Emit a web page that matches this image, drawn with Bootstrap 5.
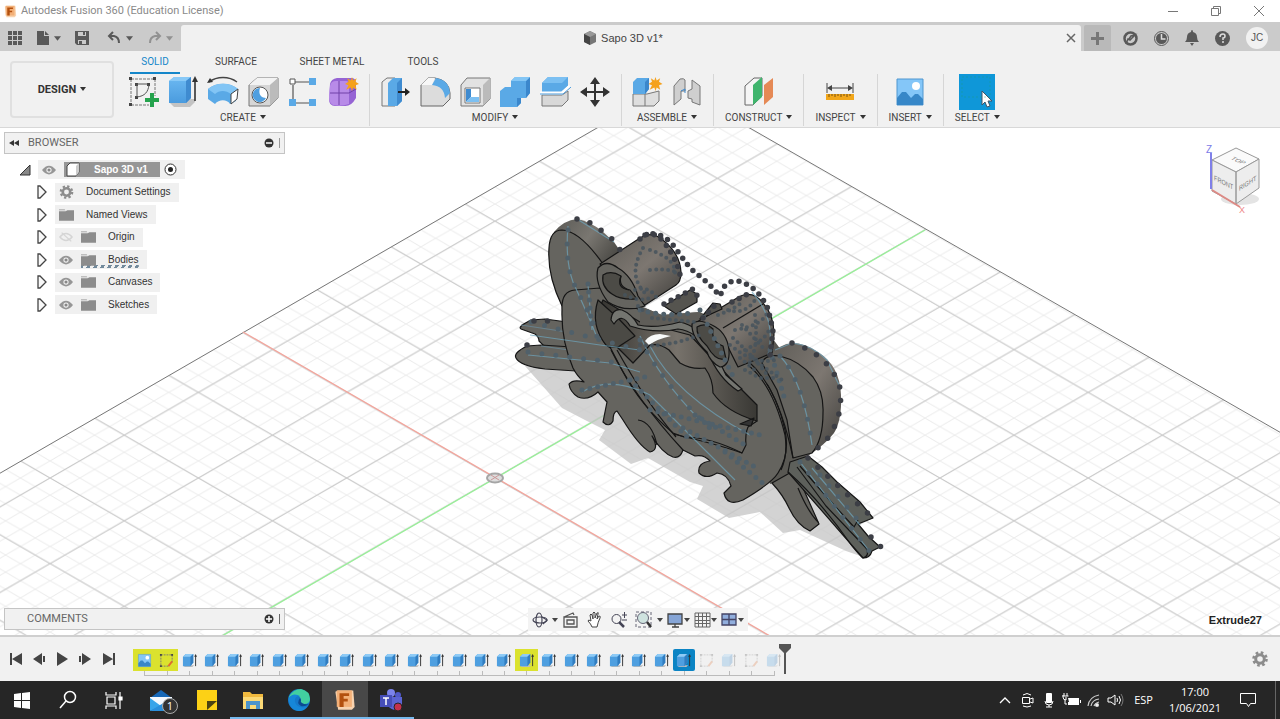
<!DOCTYPE html>
<html lang="en">
<head>
<meta charset="utf-8">
<meta name="viewport" content="width=device-width, initial-scale=1">
<title>Autodesk Fusion 360 (Education License)</title>
<link href="https://cdn.jsdelivr.net/npm/bootstrap@5.3.0/dist/css/bootstrap.min.css" rel="stylesheet">
<style>
body{font-family:"Liberation Sans",Arial,sans-serif;font-size:10px;line-height:16px;color:#444;background:#fff}
button{font:inherit;color:inherit;background:none;border:0;padding:0}
svg{display:block;flex:none}
.titlebar{height:22px;font:11px/22px Roboto,sans-serif;color:#8a8a8a}
.wbtn{width:43px;height:20px;color:#777;display:grid;place-items:center}
.docbar{height:29px;background:#cbcbcb;color:#595959;padding-top:3px}
.quick{width:181px}
.doctab{background:#f1f1f1;border-radius:3px 3px 0 0;font-size:11px;color:#444}
.newtab{width:27px;background:#b9b9b9;color:#777;margin-left:3px;border-radius:2px 2px 0 0;display:grid;place-items:center}
.account{width:22px;height:22px;border-radius:50%;background:#f1f1f1;color:#555}
.ribbon{background:#f1f1f1;height:77px;border-bottom:1px solid #d8d8d8;font-family:Roboto,sans-serif;color:#444}
.workspace{width:104px;height:57px;margin:10px 9px 0 10px;border:2px solid #e0e0e0;border-radius:4px;font-weight:700;font-size:11px;color:#333}
.rtabs{height:23px}
.rtabs a{color:#444;text-decoration:none;text-align:center;line-height:22px;height:23px}
.rtabs a.active{color:#1486c9;border-bottom:2px solid #1486c9}
.grp{height:52px;border-right:1px solid #d6d6d6;padding:0 6px 0 5px}
.grp.first{padding-left:0}
.grp.single{padding:0 11px}
.grp.last{border:0}
.tool{width:40px;height:36px}
.caption{line-height:16px}
.dd::after{content:"";display:inline-block;margin-left:4px;border:3px solid transparent;border-top:4px solid #333;border-bottom:0;vertical-align:2px}
.picked{background:#0f97d8;width:36px}
.scene{min-height:0}
.panelbar{width:281px;height:22px;background:#f1f1f1;border:1px solid #c4c4c4;color:#666;left:4px;font-family:Roboto,sans-serif}
.panelbar span{font-size:11px}
.tree{left:16px;top:32px;height:154px;color:#333}
.treerow{height:19px}
.plate{height:19px;background:#f0f0f0}
.expander{width:18px;height:19px}
.nested{padding-left:17px}
.rootname{background:#969696;color:#fff;font-weight:700;height:15px;line-height:15px}
.hatched{background:repeating-linear-gradient(120deg,#71899b 0 3px,transparent 3px 6px) bottom/100% 3px no-repeat}
.navbarlow{left:528px;bottom:4px;height:23px;background:#f3f3f3}
.hint{right:18px;bottom:7px;font-size:11px;font-weight:700;color:#222}
.viewcube{right:8px;top:10px}
.timeline{height:46px;background:#f1f1f1;border-top:2px solid #cfcfcf}
.transport button{width:23px;height:24px;color:#444}
.features{width:652px;height:28px;margin-left:14px}
.feature{height:22px}
.feature.mark-y{background:#dbe22e}
.feature.mark-b{background:#0b84c4;border-radius:2px}
.feature.dim svg{opacity:.25}
.feature::after{content:"";position:absolute;left:50%;top:22px;width:100%;height:5px;border:1px solid #bbb;border-width:0 0 1px 1px}
.feature:last-child::after{width:1px}
.taskbar{height:38px;background:#262626;color:#fff;font:11px/16px "Open Sans",sans-serif}
.app{width:46px;height:38px}
.app.open{box-shadow:inset 0 -2px #76b9ed}
.app.focus-app{background:#484848;box-shadow:inset 0 -2px #76b9ed}
.tray button{width:22px;height:38px}
.badge1{left:24px;top:17px;width:16px;height:16px;border-radius:50%;background:#333;border:1px solid #aaa;line-height:14px}
</style>
</head>
<body class="vh-100 d-flex flex-column overflow-hidden">

<svg width="0" height="0" class="position-absolute" aria-hidden="true">
<defs>
<linearGradient id="gb" x2="0" y2="1"><stop stop-color="#6cb9f2"/><stop offset="1" stop-color="#4a9bde"/></linearGradient>
<symbol id="arrow" viewBox="0 0 6 6"><path d="M0 1h6L3 5z" fill="currentColor"/></symbol>
<symbol id="fusion" viewBox="0 0 16 16"><path d="M1 2l2-1h11l1 12-2 2H3z" fill="#f8d3b0"/><path d="M2 1h11v12H2z" fill="#f3b078"/><path d="M4 3h7v2H7v2h3v2H7v4H4z" fill="#b3500f"/></symbol>
<symbol id="sketch" viewBox="0 0 32 32"><path d="M4 3h24M4 3v27M28 3v17M4 29h18" stroke="#777" stroke-dasharray="3 1" fill="none"/><path d="M2 1h3v3H2zM26 1h3v3h-3zM2 27h3v3H2zM8 7h3v3H8zM20 7h3v3h-3zM8 20h3v3H8z" fill="#444"/><path d="M10 8h11M10 8v13M22 9c-1 7-4 11-12 12" fill="none" stroke="#555"/><path d="M23 17h4v5h5v4h-5v5h-4v-5h-5v-4h5z" fill="#25a34d"/></symbol>
<symbol id="extrude" viewBox="0 0 32 32"><path d="M2 26l5 5h16l5-5v-3H2z" fill="#c3c3c3"/><path d="M2 5l5-4h17v21l-5 5H2z" fill="url(#gb)"/><path d="M2 5l5-4h17l-5 4z" fill="#88c9f7"/><path d="M19 5l5-4v21l-5 5z" fill="#3f8bd0"/><path d="M28 3v22" stroke="#333" stroke-width="1.6"/><path d="M28 0l3 6h-6z" fill="#333"/></symbol>
<symbol id="revolve" viewBox="0 0 32 32"><path d="M2 6C10 0 22 0 30 6" fill="none" stroke="#444" stroke-width="1.3"/><path d="M0 7l6-1-3-4z" fill="#333"/><path d="M1 13c8-7 22-7 30 0l-2 12-6 3c-3-5-11-5-15 0l-7-5z" fill="#5aa9e6"/><path d="M1 13c8-7 22-7 30 0l-7 5c-5-4-12-4-16 0z" fill="#82c5f5"/><path d="M24 18l7-5-1 10-6 5z" fill="#fff" stroke="#444"/></symbol>
<symbol id="hole" viewBox="0 0 32 32"><path d="M2 9l8-7h21v20l-8 8H2z" fill="#d6d6d6" stroke="#777"/><path d="M2 9l8-7h21l-8 7z" fill="#f3f3f3"/><path d="M23 9l8-7v20l-8 8z" fill="#bbb"/><circle cx="13" cy="19" r="8" fill="#fff" stroke="#555"/><path d="M13 12a7 7 0 1 0 6 10c-5 0-8-4-6-10z" fill="#4f9fe0"/></symbol>
<symbol id="pattern" viewBox="0 0 32 32"><path d="M8 6h17M6 9v16M9 27h16" stroke="#555" stroke-width="1.2"/><path d="M3 3h5v5H3z" fill="#fff" stroke="#555"/><path d="M22 2h7v7h-7zM2 23h7v7H2zM22 23h7v7h-7z" fill="#5aa9e6"/></symbol>
<symbol id="spark" viewBox="0 0 12 12"><path d="M6 0l1 3 3-2-1 3 3 2-3 1 1 4-3-2-1 3-1-3-4 2 2-4-3-1 3-2-1-3 3 2z" fill="#f5a11b"/></symbol>
<symbol id="form" viewBox="0 0 32 32"><path d="M3 8q1-5 7-6h15q4 0 4 6v14q-5 9-12 8H8q-6 0-6-7z" fill="#9664d4"/><path d="M3 10q1-5 6-5h11q2 0 2 6v17q-8 3-16 1-4-2-4-8z" fill="#b88be8"/><path d="M12 5v24M3 17h19l7-4" stroke="#7040a8" fill="none"/><use href="#spark" x="18" y="1" width="14" height="14"/></symbol>
<symbol id="press" viewBox="0 0 32 32"><path d="M3 6l5-4h8v28H3z" fill="#ececec" stroke="#777"/><path d="M9 7l5-5h9v23l-5 5H9z" fill="#5aa9e6"/><path d="M18 7l5-5v23l-5 5z" fill="#3f8bd0"/><path d="M19 16h8" stroke="#222" stroke-width="2"/><path d="M26 12l5 4-5 4z" fill="#222"/></symbol>
<symbol id="fillet" viewBox="0 0 32 32"><path d="M2 9l7-7h7q14 2 15 15v6l-7 7H2z" fill="#dcdcdc" stroke="#666"/><path d="M2 9l7-7h7l-3 7z" fill="#f7f7f7"/><path d="M13 9l4-7q13 2 14 15l-5 5q-1-12-13-13z" fill="#5aa9e6"/></symbol>
<symbol id="shell" viewBox="0 0 32 32"><path d="M2 9l6-7h23v21l-7 7H2z" fill="#e2e2e2" stroke="#777"/><path d="M24 9l7-7v21l-7 7z" fill="#bbb"/><path d="M6 12h15v15H6z" fill="#fff" stroke="#777"/><path d="M7 13h5v8l-5 5z" fill="#3f8bd0"/><path d="M12 21h8v5H7z" fill="#7cc0f2"/></symbol>
<symbol id="combine" viewBox="0 0 32 32"><path d="M1 15l5-4h6V5l4-4h15v16l-4 5h-5v5l-4 4H1z" fill="#5aa9e6"/><path d="M27 5l4-4v16l-4 5zM18 22h4v5l-4 4z" fill="#3b87cc"/><path d="M12 5l4-4h15l-4 4z" fill="#84c6f5"/></symbol>
<symbol id="split" viewBox="0 0 32 32"><path d="M3 19h20l6-4v9l-6 6H3z" fill="#d8d8d8" stroke="#777"/><path d="M3 7l6-6h20v9l-6 6H3z" fill="#5aa9e6"/><path d="M3 7l6-6h20l-6 6z" fill="#7cc0f2"/><path d="M1 17h22l8-7" stroke="#fff" stroke-width="3" fill="none"/><path d="M1 18h23l8-7" stroke="#4b9ada" fill="none"/></symbol>
<symbol id="move" viewBox="0 0 32 32"><path d="M16 4v24M4 16h24" stroke="#333" stroke-width="2"/><path d="M16 1l5 7H11zM16 31l5-7H11zM1 16l7-5v10zM31 16l-7-5v10z" fill="#333"/></symbol>
<symbol id="newcomp" viewBox="0 0 32 32"><path d="M2 18h14l12-3v10l-5 5H2z" fill="#dedede" stroke="#777"/><path d="M14 17v13" stroke="#777"/><path d="M2 6l4-4h12v11l-4 5H2z" fill="#5aa9e6"/><path d="M14 6l4-4v11l-4 5z" fill="#3b87cc"/><use href="#spark" x="17" y="1" width="15" height="14"/></symbol>
<symbol id="joint" viewBox="0 0 32 32"><path d="M3 29V10l6-7q4-1 5 1v11h-4v8zM29 29V10l-8-6v9l-4 2v7l4 1v3z" fill="#cfcfcf" stroke="#777"/><path d="M10 15l4-2v4" stroke="#3f8bd0" fill="none"/></symbol>
<symbol id="plane" viewBox="0 0 32 32"><path d="M2 10l9-8h8v18l-9 9H2z" fill="#f5f5f5" stroke="#666"/><path d="M10 9l9-8v20l-9 8z" fill="#3fb56d"/><path d="M21 9l9-7v19l-9 8z" fill="#e58955"/></symbol>
<symbol id="ruler" viewBox="0 0 32 32"><path d="M3 7v10M29 7v10M5 12h22" stroke="#444"/><path d="M3 12l5-3v6zM29 12l-5-3v6z" fill="#444"/><path d="M2 18h28v6H2z" fill="#f2a71b"/><path d="M5 18v3m3-3v2m3-2v3m3-3v2m3-2v3m3-3v2m3-2v3m3-3v2" stroke="#7a5310"/></symbol>
<symbol id="image" viewBox="0 0 32 32"><path d="M3 3h26v26H3z" fill="#84c6f8" stroke="#4e96cf"/><path d="M3 22l5-6h4l5 6 4-4h3l5 5v6H3z" fill="#3787c8"/><circle cx="22" cy="10" r="4" fill="#fff"/></symbol>
<symbol id="cursor" viewBox="0 0 36 36"><path d="M23 17v14l3-3 2 5 3-1-2-5h4z" fill="#fff" stroke="#456"/><path d="M3 3h28v20H3z" fill="none" stroke="#1ba079" opacity=".4" stroke-dasharray="2 2"/></symbol>
<symbol id="eye" viewBox="0 0 16 12"><path d="M0 6q8-10 16 0-8 10-16 0z" fill="#969696"/><circle cx="8" cy="6" r="3" fill="#f0f0f0"/><circle cx="8" cy="6" r="1.8" fill="#888"/></symbol>
<symbol id="eyeoff" viewBox="0 0 16 12"><path d="M1 6q7-8 14 0-7 8-14 0zM3 1l11 10" fill="none" stroke="#d5d5d5" stroke-width="1.5"/></symbol>
<symbol id="folder" viewBox="0 0 16 14"><path d="M0 1h6l1 1H0zM0 3h7l2-1h7v11H0z" fill="#8c8c8c"/></symbol>
<symbol id="gear" viewBox="0 0 16 16"><circle cx="8" cy="8" r="4.3" fill="none" stroke="#8c8c8c" stroke-width="3"/><circle cx="8" cy="8" r="6.5" fill="none" stroke="#8c8c8c" stroke-width="2.6" stroke-dasharray="2.6 2.5"/></symbol>
<symbol id="exp" viewBox="0 0 10 14"><path d="M1 1h2l6 6-6 6H1z" fill="#f8f8f8" stroke="#444" stroke-width="1.3"/></symbol>
<symbol id="miniSketch" viewBox="0 0 16 16"><path d="M2 2h12M2 2v12h9M14 2v8" fill="none" stroke="#777" stroke-dasharray="2 1"/><path d="M1 1h2v2H1zM13 1h2v2h-2zM1 13h2v2H1z" fill="#444"/><path d="M10 14l4-5" stroke="#e06c2d" stroke-width="2"/></symbol>
<symbol id="miniExtrude" viewBox="0 0 16 16"><path d="M1 13l2 2h8l2-2z" fill="#bbb"/><path d="M1 4l3-3h8v9l-3 4H1z" fill="#4e9fe0"/><path d="M1 4l3-3h8L9 4z" fill="#8fcbf6"/><path d="M9 4l3-3v9l-3 4z" fill="#317dc0"/><path d="M14.500 3v11" stroke="#333"/><path d="M14.500 1l1.500 3h-3z" fill="#333"/></symbol>
</defs></svg>

<header class="titlebar d-flex align-items-center ps-1">
  <svg width="13" height="15"><use href="#fusion"/></svg><span class="ms-1">Autodesk Fusion 360 (Education License)</span>
  <div class="ms-auto d-flex">
    <button class="wbtn" aria-label="Minimize"><svg width="12" height="12" stroke="currentColor"><path d="M1 6.500h10"/></svg></button>
    <button class="wbtn" aria-label="Restore"><svg width="12" height="12" fill="none" stroke="currentColor"><path d="M1.500 3.500h7v7h-7zM3.500 3V1.500h7v7H9"/></svg></button>
    <button class="wbtn" aria-label="Close"><svg width="12" height="12" stroke="currentColor"><path d="M1 1l10 10M11 1L1 11"/></svg></button>
  </div>
</header>

<nav class="docbar d-flex" aria-label="Documents">
  <div class="quick d-flex align-items-center justify-content-between px-2">
    <button aria-label="Data panel"><svg width="14" height="14" fill="currentColor"><path d="M0 0h4v4H0zM5 0h4v4H5zM10 0h4v4h-4zM0 5h4v4H0zM5 5h4v4H5zM10 5h4v4h-4zM0 10h4v4H0zM5 10h4v4H5zM10 10h4v4h-4z"/></svg></button>
    <button class="d-flex align-items-center gap-1" aria-label="File"><svg width="14" height="16" fill="currentColor"><path d="M1 1h7v5h5v9H1zM9 1l4 4H9z"/></svg><svg width="7" height="7"><use href="#arrow"/></svg></button>
    <button aria-label="Save"><svg width="14" height="14"><path d="M0 0h14v14H2l-2-2z" fill="currentColor"/><path d="M3 1h8v4H3zM3 9h8v4H3z" fill="#cbcbcb"/><path d="M4 10h3v3H4zM8 1h2v3H8z" fill="currentColor"/></svg></button>
    <button class="d-flex align-items-center gap-1 ps-1" aria-label="Undo"><svg width="15" height="14" fill="none" stroke="currentColor" stroke-width="2"><path d="M6 1L2 5l4 4M2 5h5q5 1 5 7"/></svg><svg width="7" height="7"><use href="#arrow"/></svg></button>
    <button class="d-flex align-items-center gap-1 opacity-50" aria-label="Redo"><svg width="15" height="14" fill="none" stroke="currentColor" stroke-width="2"><path d="M9 1l4 4-4 4M13 5H8q-5 1-5 7"/></svg><svg width="7" height="7"><use href="#arrow"/></svg></button>
  </div>
  <div class="doctab flex-grow-1 d-flex align-items-center">
    <div class="mx-auto d-flex align-items-center gap-1"><svg width="14" height="16"><path d="M1 4l6-3 6 3v8l-6 3-6-3z" fill="#777"/><path d="M1 4l6 3 6-3-6-3z" fill="#999"/><path d="M1 4l6 3v8l-6-3z" fill="#444"/></svg>Sapo 3D v1*</div>
    <button class="me-1" aria-label="Close tab"><svg width="12" height="12" stroke="#666" stroke-width="1.500"><path d="M2 2l8 8M10 2l-8 8"/></svg></button>
  </div>
  <button class="newtab" aria-label="New tab"><svg width="13" height="13" fill="currentColor"><path d="M5 0h3v5h5v3H8v5H5V8H0V5h5z"/></svg></button>
  <div class="d-flex align-items-center gap-3 ps-2 ms-1 me-2 pe-1">
    <button aria-label="Extensions"><svg width="15" height="15" fill="none" stroke="currentColor"><circle cx="7.500" cy="7.500" r="6" stroke-width="2.500"/><path d="M3 13l2-5 2 1 5-5-4 1-2 3" stroke-width="1.500" fill="#cbcbcb"/></svg></button>
    <button aria-label="Job status"><svg width="15" height="15" fill="none" stroke="currentColor"><circle cx="7.500" cy="7.500" r="7"/><circle cx="7.500" cy="7.500" r="5.500" fill="currentColor" stroke="none"/><path d="M7.500 3v5h4" stroke="#ddd" stroke-width="1.500"/></svg></button>
    <button aria-label="Notifications"><svg width="14" height="16" fill="currentColor"><path d="M7 0q1 0 1 2 4 1 4 5 0 3 2 5H0q2-2 2-5 0-4 4-5 0-2 1-2zM5 13h4l-2 3z"/></svg></button>
    <button aria-label="Help"><svg width="15" height="15"><circle cx="7.500" cy="7.500" r="7.500" fill="currentColor"/><path d="M5 6q0-3 3-3 2 0 2 2t-2 2v2M8 10v2" fill="none" stroke="#ddd" stroke-width="1.500"/></svg></button>
    <button class="account" aria-label="Account">JC</button>
  </div>
</nav>

<section class="ribbon d-flex" aria-label="Ribbon">
  <button class="workspace dd">DESIGN</button>
  <div>
    <div class="rtabs d-flex">
      <a href="#" class="active" style="width:50px;margin-left:7px">SOLID</a><a href="#" style="width:112px">SURFACE</a><a href="#" style="width:80px">SHEET METAL</a><a href="#" style="width:102px">TOOLS</a>
    </div>
    <div class="d-flex" id="groups"></div>
  </div>
</section>

<main class="scene flex-grow-1 position-relative overflow-hidden">
<svg class="w-100 h-100" viewBox="0 128 1280 507" preserveAspectRatio="xMinYMin slice" role="img" aria-label="3D model of a frog on an isometric grid">
<defs>
<pattern id="minor" x="495" y="478" width="29.660" height="17.120" patternUnits="userSpaceOnUse"><path d="M0 0L29.660 17.120M0 17.120L29.660 0" stroke="#ebebeb"/></pattern>
<pattern id="major" x="495" y="478" width="148.300" height="85.600" patternUnits="userSpaceOnUse"><path d="M0 0L148.300 85.600M0 85.600L148.300 0" stroke="#c6c6c6"/></pattern>
<linearGradient id="g1" x2="1" y2=".6"><stop stop-color="#5a5955"/><stop offset=".5" stop-color="#7a7771"/><stop offset="1" stop-color="#44433f"/></linearGradient>
<linearGradient id="g2" x2="1" y2="1"><stop stop-color="#5d5b56"/><stop offset=".5" stop-color="#7d7771"/><stop offset="1" stop-color="#3e3d3a"/></linearGradient>
<linearGradient id="g3" x2="1"><stop stop-color="#34332f"/><stop offset=".5" stop-color="#77726b"/><stop offset="1" stop-color="#393834"/></linearGradient>
</defs>
<path d="M673 84L-10 479V640H1290V438z" fill="url(#minor)"/>
<path d="M673 84L-10 479V640H1290V438z" fill="url(#major)"/>
<path d="M-10 479L673 84L1290 438" fill="none" stroke="#777"/>
<path d="M222 636L925 230" stroke="#98f098" stroke-width="1.300"/><path d="M243 332L770 636" stroke="#f3a59c" stroke-width="1.300"/>
<ellipse cx="495" cy="478" rx="8" ry="4.500" fill="#ddd" stroke="#a5a5a5" stroke-width="2"/><path d="M491 475l8 5M491 480l8-5" stroke="#c99"/>

<path d="M525 366L562 408 585 420 605 430 599 440 631 464 648 458 690 482 703 486 697 499 729 518 760 512 783 533 800 530 846 551 866 558 800 480 700 420 570 360z" fill="#c4c4c4" opacity=".75"/>

<path d="M640 306L662 315 700 312 735 330 770 335 790 362 800 400 806 458 790 478 770 484 740 380z" fill="#595853"/>
<g stroke="#151515" stroke-width="1.200" stroke-linejoin="round" fill="#65645f">
<!-- left hand -->
<path d="M567 322L545 319 531 320Q517 327 521 329L535 334Q539 337 539 341L545 347 568 353z"/><path d="M572 347L541 345 527 346Q513 353 516 358 520 366 545 369L576 371z"/><path d="M521 325l46 7M541 346l28 4" stroke="#68808c" fill="none"/>
<!-- left ear -->
<path d="M554 232Q564 220 577 219 589 221 602 231L614 242 625 258 606 275z" fill="url(#g1)" stroke="none"/>
<path d="M562 306Q547 275 549 248 550 230 562 230 580 231 603 264L600 290z"/>
<!-- right ear -->
<path d="M767 357Q780 344 792 343 805 343 818 352 840 366 841 395 842 420 834 433 826 444 805 458L785 380z" fill="url(#g2)" stroke="none"/>
<path d="M762 363Q765 354 780 356 800 361 813 377 824 392 823 413 823 440 812 453L793 458 787 420 777 390z"/>
<!-- right hand -->
<path d="M772 483Q783 495 789 508 797 525 810 531L819 524 795 470z"/><path d="M788 472L863 558Q870 558 872 551L880 547 868 536 858 524 873 518 860 502 837 482 822 467 808 456 790 462z" fill="#5d605b"/><path d="M788 472Q820 500 852 546 860 556 863 558 870 556 866 548L826 506 797 467M800 466Q820 490 854 527L858 520M798 488Q808 512 818 522" fill="none"/>
<!-- body silhouette -->
<path d="M562 310Q561 291 575 290L600 288 625 300 660 325 700 330 747 360Q775 385 785 430 790 455 778 473 772 483 743 500 727 507 724 493L731 486Q728 474 717 473 706 480 699 473 697 463 710 461 704 454 695 456L683 450 Q680 459 673 457 662 453 652 436 660 450 650 452 639 446 623 420L617 411Q613 412 613 421 609 428 603 422L607 402 598 392Q588 401 578 397 570 392 569 384 573 379 584 382 577 376 573 368 561 340 562 310z"/>
<!-- mouth cavity -->
<path d="M603 300L640 322 690 335 730 378 757 405 757 421 748 425 700 420 650 360 633 363 606 345Q590 325 603 300z" fill="url(#g3)"/>
<path d="M598 300Q590 325 606 345L615 349 635 336 618 318z" fill="#4b4a45"/>
<path d="M645 341Q650 334 660 334L671 336Q657 339 649 345z" fill="#f7f9f9" stroke="none"/>
<!-- mouth plate -->
<path d="M610 347L617 347 633 363 650 345Q660 343 669 350L680 363Q692 370 705 368 713 379 713 393 726 412 757 421L748 427Q745 434 746 445L742 453Q710 437 684 437L673 433Q640 405 622 370z"/>
<path d="M673 434Q720 445 742 453M611 350Q635 398 683 450M638 420Q652 422 657 445M617 350Q646 402 676 437" fill="none"/>
<path d="M740 424l14-6-3 8z" fill="#333"/>
<!-- inner lip -->
<path d="M640 306L662 315 700 312 700 330 680 324 655 329 640 325z" fill="#5f5d58" stroke="none"/>
<path d="M611 320Q612 308 622 310 632 314 638 325 655 329 680 322 698 326 712 346L726 375 742 389 738 391Q718 378 708 352 697 331 678 329 655 334 630 326 622 312 614 324z" fill="#747570"/>
<!-- left eye -->
<path d="M600 264L640 238Q652 230 664 241 680 254 681 272 681 282 676 285L645 305 620 290z" fill="url(#g2)"/>
<path d="M598 268Q606 259 618 268 632 276 638 296L645 306Q625 313 608 302 594 283 598 268z"/>
<path d="M603 275Q611 270 621 276 618 287 630 290L637 299Q620 300 612 294 601 287 603 275z" fill="#4c4b46"/><path d="M621 276q-5 12 8 14" fill="none"/>
<!-- right eye -->
<path d="M697 322L737 298Q752 289 763 303 774 315 774 335L772 353 738 367 722 335z" fill="url(#g2)"/>
<path d="M723 328L763 304" fill="none"/>
<path d="M692 324Q698 318 712 325 727 332 729 350 730 366 720 367 710 362 707 352 691 337 692 324z"/>
<path d="M697 327Q706 322 713 329 711 342 723 346L726 359Q716 362 707 346 696 336 697 327z" fill="#4c4b46"/>
<path d="M664 306L690 290 697 294 697 302 676 314zM700 319L713 303 720 304 722 309z" fill="#55544f"/>
<path d="M748 365Q773 385 785 435 788 455 781 470M767 384Q783 410 793 458" fill="none"/>
</g>

<!-- sketch curves projected on the body -->
<g fill="none" stroke="#6ea5be" stroke-width="1.200" opacity=".7">
<path d="M568 226Q565 260 573 282L590 320 598 340M588 285L592 330M530 335L600 345 640 350M528 355L610 363 640 372M640 336Q660 380 700 420M650 346Q675 395 750 435M582 392Q610 375 650 395L735 480M780 356Q803 380 812 445M800 462L870 552M812 468L860 525M775 350L792 343Q812 345 827 360L840 387M752 292Q777 320 768 355M577 219L614 242"/>
</g>
<g fill="none" stroke-linecap="round" stroke="#50606a" stroke-width="5">
<path stroke-dasharray="0 14" d="M568 230Q565 260 573 282L592 320 598 340M780 356Q803 380 812 445M531 322L640 350M528 352L620 363M800 462L870 552M820 475L862 525M640 340Q668 390 710 428"/>
<path stroke-dasharray="0 8" d="M588 284L592 330M582 390L650 376M630 380L690 440M650 410L760 435M683 428L757 468M695 415L745 445M725 452L765 485M700 310L735 380M770 350L785 400M640 310Q670 318 695 312"/>
</g>
<g fill="none" stroke-linecap="round" stroke="#47545d" stroke-width="4" opacity=".85">
<path stroke-dasharray="0 6" d="M643 248Q627 275 645 293M650 250Q680 260 674 278M635 290Q650 285 658 300M728 310Q745 315 755 300M735 330Q765 325 768 310M730 345Q754 365 775 360M745 350Q765 340 769 330M755 315Q759 350 748 365M733 338Q753 356 768 376M742 325L765 350M718 315Q735 309 742 302M640 345Q665 348 700 335M745 370L760 378 777 378M650 270Q665 268 676 272M638 306L645 312M625 295Q640 302 650 298M652 318L695 322M757 362L782 380M740 358L757 372"/>
</g>
<g fill="none" stroke-linecap="round" stroke="#3c3e45" stroke-width="5.500">
<path stroke-dasharray="0 13.500" d="M577 219Q589 220 602 231 617 241 622 254M792 343Q830 355 840 388 844 420 823 444L808 455M808 458L874 519M871 537l10 10M877 554v0M534 321h15M527 345h1"/>
<path stroke-dasharray="0 8" d="M640 239Q650 228 663 241 680 263 681 282M645 235Q660 230 673 245L690 268 708 283 720 296 724 287Q730 280 738 281 758 286 768 309L773 330 770 356M664 304L693 289 698 297M703 318L718 302M732 302L752 292"/>
</g>
</svg>

<div class="panelbar position-absolute d-flex align-items-center px-1" style="top:4px"><svg width="11" height="7" fill="#333"><path d="M0 3l5-3v6zM5 3l5-3v6z"/></svg><span class="ms-2">BROWSER</span><svg class="ms-auto" width="16" height="10"><circle cx="5" cy="5" r="4.500" fill="#333"/><path d="M2 5h6" stroke="#fff" stroke-width="1.500"/><path d="M15.500 0v10" stroke="#999"/></svg></div>
<div class="tree position-absolute d-flex flex-column justify-content-between" id="tree"></div>

<svg class="viewcube position-absolute" width="70" height="76" aria-label="View cube"><ellipse cx="38" cy="61" rx="19" ry="6" fill="#e4e4e4"/><path d="M10 22L34 10 57 21V50L34 66 10 53z" fill="#eee"/><path d="M10 22L34 10 57 21 34 34z" fill="#fafafa" stroke="#999"/><path d="M10 22L34 34V66L10 53zM57 21L34 34V66L57 50z" fill="#ededed" stroke="#999"/><path d="M9 15V51" stroke="#8080e8" stroke-width="2"/><path d="M10 52L38 69" stroke="#dd8a85" stroke-width="2"/><g font-family="Liberation Sans" font-size="7" fill="#777"><text transform="matrix(.8 .4 0 1 12 42)">FRONT</text><text transform="matrix(.8 -.5 0 1 37 53)">RIGHT</text><text transform="matrix(.9 .4 -.8 .5 28 21)">TOP</text></g><text x="4" y="15" font-size="10" fill="#7b7be8">Z</text><text x="37" y="75" font-size="9" fill="#e88">X</text></svg>

<div class="panelbar position-absolute d-flex align-items-center px-1" style="bottom:5px"><span style="margin-left:18px">COMMENTS</span><svg class="ms-auto" width="16" height="10"><circle cx="5" cy="5" r="4.500" fill="#333"/><path d="M2 5h6M5 2v6" stroke="#fff" stroke-width="1.500"/><path d="M15.500 0v10" stroke="#666"/></svg></div>

<div class="navbarlow position-absolute d-flex align-items-center" role="toolbar" aria-label="Navigation">
  <button class="d-flex align-items-center gap-1 ms-1" aria-label="Orbit"><svg width="16" height="16" fill="none" stroke="#445" stroke-width="1.200"><ellipse cx="8" cy="8" rx="7" ry="3"/><ellipse cx="7" cy="8" rx="3" ry="7"/><path d="M10 5l5 3-4 4" /></svg><svg width="6" height="6"><use href="#arrow"/></svg></button>
  <button class="ms-1" aria-label="Look at"><svg width="17" height="16" fill="none" stroke="#555" stroke-width="1.300"><path d="M2 5h13v10H2zM2 5l9-4 1 2M5 8h7v4H5z"/></svg></button>
  <button class="ms-2" aria-label="Pan"><svg width="16" height="17" fill="#fff" stroke="#444"><path d="M5 16q-1-3-4-6 0-2 3 0L3 4q1-2 2 0l1 4V2q1-2 2 0v5l2-5q2-1 1 1l-1 5 2-3q2 0 1 2-2 4-3 9z"/></svg></button>
  <button class="ms-2" aria-label="Zoom"><svg width="16" height="16" fill="none" stroke="#445"><circle cx="5.500" cy="7" r="4.500"/><path d="M8 10l5 5" stroke-width="2.500"/><path d="M11 3h5M13.500 0v6M11 8h5"/></svg></button>
  <button class="ms-2 d-flex align-items-center gap-1" aria-label="Fit"><svg width="18" height="17" fill="none" stroke="#667"><path d="M1 1h15v15H1z" stroke-dasharray="3 2"/><circle cx="8" cy="7" r="5.500" fill="#cfe3df"/><path d="M12 11l4 5" stroke="#333" stroke-width="2.500"/></svg><svg width="6" height="6"><use href="#arrow"/></svg></button>
  <button class="ms-1 d-flex align-items-center" aria-label="Display"><svg width="17" height="16" fill="#86a5d6" stroke="#444" stroke-width="1.300"><path d="M1 2h14v10H1zM5 15h7M8 12v3"/></svg><svg width="6" height="6"><use href="#arrow"/></svg></button>
  <button class="ms-1 d-flex align-items-center" aria-label="Grid"><svg width="17" height="16" fill="none" stroke="#666"><path d="M1 1h15v14H1zM4.500 1v14M8.500 1v14M12.500 1v14M1 4.500h15M1 8.500h15M1 11.500h15"/></svg><svg width="6" height="6"><use href="#arrow"/></svg></button>
  <button class="ms-1 me-1 d-flex align-items-center" aria-label="Viewports"><svg width="17" height="14" fill="#91aedd" stroke="#446" stroke-width="1.300"><path d="M1 1h14v11H1zM8 1v11M1 6.500h14"/></svg><svg width="6" height="6"><use href="#arrow"/></svg></button>
</div>
<div class="hint position-absolute">Extrude27</div>
</main>

<section class="timeline d-flex align-items-center" aria-label="Timeline">
  <div class="transport d-flex ps-1">
    <button aria-label="Start"><svg width="23" height="14" fill="currentColor"><path d="M6 1h2v12H6zM18 1v12L8 7z"/></svg></button>
    <button aria-label="Back"><svg width="23" height="14" fill="currentColor"><path d="M15 1v12L6 7zM16 4h2v6h-2z"/></svg></button>
    <button aria-label="Play"><svg width="23" height="14" fill="currentColor"><path d="M7 0v14l11-7z"/></svg></button>
    <button aria-label="Forward"><svg width="23" height="14" fill="currentColor"><path d="M9 1v12l9-6zM6 4h2v6H6z"/></svg></button>
    <button aria-label="End"><svg width="23" height="14" fill="currentColor"><path d="M7 1v12l10-6zM17 1h2v12h-2z"/></svg></button>
  </div>
  <div class="features d-flex pt-1" id="features"></div>
  <svg width="12" height="32" fill="#555" style="margin-left:-6px"><path d="M0 1h12v4L7 10v21H5V10L0 5z"/></svg>
  <button class="ms-auto me-2 pe-1" aria-label="Timeline settings"><svg width="16" height="16"><use href="#gear"/></svg></button>
</section>

<footer class="taskbar d-flex align-items-center">
  <div class="d-flex" id="apps"></div>
  <div class="tray ms-auto d-flex align-items-center">
    <button aria-label="Hidden icons"><svg width="22" height="16" fill="none" stroke="#fff" stroke-width="1.300"><path d="M6 11l5-5 5 5"/></svg></button>
    <button aria-label="Meet now"><svg width="22" height="16" fill="none" stroke="#fff"><path d="M6.500 5.500h7v6h-7zM14 7l3-1v5l-3-1M7 3q4-3 8 0M7 14q4 2 8 0"/></svg></button>
    <button aria-label="Microphone"><svg width="22" height="16" fill="#fff"><rect x="8" y="1" width="6" height="10" rx="1"/><path d="M7 9q0 4 4 4t4-4M11 13v2M8 15h6" fill="none" stroke="#fff"/></svg></button>
    <button aria-label="Battery"><svg width="22" height="16" fill="#fff"><path d="M8 6h11v7H8v-3h1zM20 8h1v3h-1z"/><path d="M3 3v2q0 3 3 3V5M4 1v3M7 1v3M2.500 4h6M5 8v4h2" stroke="#fff" fill="none"/></svg></button>
    <button aria-label="Wi-Fi"><svg width="22" height="16" fill="none" stroke="#ccc" stroke-width="1.200"><path d="M6 14Q7 5 17 3M9 14q1-6 8-7M12 14q1-3 5-4"/><circle cx="15" cy="13" r="1.500" fill="#fff"/></svg></button>
    <button aria-label="Volume"><svg width="22" height="16" fill="none" stroke="#fff"><path d="M4 6h3l4-3v10l-4-3H4zM13 6q1 2 0 4M15 4q3 4 0 8"/><path d="M17 2q4 6 0 12" stroke="#777"/></svg></button>
    <span class="ms-2 me-3">ESP</span>
    <div class="text-center">17:00<br>1/06/2021</div>
    <button class="ms-3 me-3" aria-label="Action center"><svg width="22" height="16" fill="none" stroke="#fff"><path d="M3.500 1.500h15v10h-5l-2 3-2-3h-6z"/></svg></button>
    <div style="width:5px;height:38px;border-left:1px solid #666"></div>
  </div>
</footer>

<script src="https://cdn.jsdelivr.net/npm/bootstrap@5.3.0/dist/js/bootstrap.bundle.min.js"></script>
<script>
const use = (id, w, h = w) => `<svg width="${w}" height="${h}"><use href="#${id}"/></svg>`;
const center = 'd-flex align-items-center justify-content-center';

const groups = [
  ['CREATE', ['sketch','extrude','revolve','hole','pattern','form'], 'first'],
  ['MODIFY', ['press','fillet','shell','combine','split','move'], ''],
  ['ASSEMBLE', ['newcomp','joint'], ''],
  ['CONSTRUCT', ['plane'], 'single'],
  ['INSPECT', ['ruler'], 'single'],
  ['INSERT', ['image'], 'single'],
  ['SELECT', ['cursor'], 'single last'],
];
document.getElementById('groups').innerHTML = groups.map(([name, icons, cls]) =>
  `<div class="grp ${cls} d-flex flex-column align-items-center justify-content-between"><div class="d-flex">` +
  icons.map(i => `<button class="tool ${center} ${i === 'cursor' ? 'picked' : ''}" aria-label="${i}">${use(i, i === 'cursor' ? 36 : 32)}</button>`).join('') +
  `</div><button class="caption dd">${name}</button></div>`).join('');

const rows = [
  ['Document Settings', 'gear'], ['Named Views', 'folder'], ['Origin', 'folder', 'eyeoff'],
  ['Bodies', 'folder', 'eye'], ['Canvases', 'folder', 'eye'], ['Sketches', 'folder', 'eye'],
];
document.getElementById('tree').innerHTML =
  `<div class="treerow d-flex align-items-center"><button class="expander ${center}" aria-label="Collapse"><svg width="12" height="12"><path d="M1 11L11 1v10z" fill="#888" stroke="#333"/></svg></button>
   <div class="plate d-flex align-items-center ms-1 ps-1 pe-2">${use('eye',14,12)}<span class="rootname d-flex align-items-center ms-2 pe-2"><svg width="18" height="15"><path d="M3 4l3-3h9v9l-3 4H3z" fill="#fff" stroke="#444"/><path d="M12 4l3-3v9l-3 4z" fill="#ccc"/></svg><span class="ps-2 ms-1 me-1">Sapo 3D v1</span></span>
   <svg class="ms-1" width="13" height="13"><circle cx="6.500" cy="6.500" r="5.500" fill="#fff" stroke="#333"/><circle cx="6.500" cy="6.500" r="2.500" fill="#222"/></svg></div></div>` +
  rows.map(([name, icon, eye]) =>
  `<div class="treerow nested d-flex align-items-center"><button class="expander ${center}" aria-label="Expand">${use('exp',10,14)}</button>
   <div class="plate d-flex align-items-center ps-1 ms-1 pe-2">${eye ? use(eye,14,12) + '<span class="ps-2"></span>' : ''}<span class="d-flex align-items-center ${name === 'Bodies' ? 'hatched' : ''}">${use(icon,15,14)}<span class="ps-2 ms-1">${name}</span></span></div></div>`).join('');

const feats = ['image','miniSketch', ...Array(23).fill('miniExtrude'), 'miniSketch','miniExtrude','miniSketch','miniExtrude'];
document.getElementById('features').innerHTML = feats.map((f, i) =>
  `<button class="feature position-relative flex-fill ${center} ${i < 2 || i === 17 ? 'mark-y' : i === 24 ? 'mark-b' : i > 24 ? 'dim' : ''}" aria-label="Feature ${i + 1}">${use(f, 15)}</button>`).join('');

const apps = [
  ['Start','','<path d="M2 5l7-1v7H2zM10 4l8-1v8h-8zM2 12h7v7l-7-1zM10 12h8v8l-8-1z" fill="#fff"/>'],
  ['Search','','<g fill="none" stroke="#fff" stroke-width="1.500"><circle cx="12" cy="8" r="5.500"/><path d="M8 12l-6 7"/></g>'],
  ['Task view','','<g fill="none" stroke="#fff" stroke-width="1.200"><path d="M2 3v3h10V3M3 8h8v7H3zM2 20v-3h10v3M16 3v17"/><path d="M15 8h3v3h-3z" fill="#fff"/></g>'],
  ['Mail','','<path d="M0 9L11 1l11 8v12H0z" fill="#1668b8"/><path d="M0 8h22v2l-11 8L0 10z" fill="#f4f9ff"/><path d="M0 9l11 8-11 5z" fill="#38a5ea"/><path d="M22 9L0 22h22z" fill="#2a8fdc"/>'],
  ['Sticky notes','','<path d="M1 1h20v20H1z" fill="#fcd116"/><path d="M11 21V12h10z" fill="#4b4312"/>'],
  ['File Explorer','open','<path d="M1 3h7l2 2h11v15H1z" fill="#f0b93e"/><path d="M1 8h20v12H1z" fill="#fbd976"/><path d="M4 20v-8h14v8h-4v-4H8v4z" fill="#4c94cb"/>'],
  ['Edge','open','<circle cx="11" cy="11" r="11" fill="#1579ca"/><path d="M1 8Q5 0 13 0q9 2 9 10 0 5-6 5-4 0-3-3 0-6-6-6-4 0-6 3z" fill="#42cfa0"/><path d="M1 9q4-6 11-2-6 0-5 6 2 7 12 5-6 7-14 2Q0 15 1 9z" fill="#1687d8"/><path d="M12 9q-4 5 1 8 4 1 8-2-4 1-7-1-2-1-1-3z" fill="#0c4b92"/>'],
  ['Fusion 360','focus-app','<use href="#fusion" width="22" height="22"/>'],
  ['Teams','open','<circle cx="11" cy="4" r="4" fill="#7b83eb"/><circle cx="18" cy="6" r="3" fill="#5059c9"/><path d="M7 8h15v8q-1 5-6 5T7 16z" fill="#5b64d2"/><path d="M0 6h12v12H0z" fill="#464eb8"/><path d="M3 9h6M6 9v7" stroke="#fff" stroke-width="1.500"/><circle cx="18" cy="18" r="4" fill="#c4314b" stroke="#262626"/>'],
];
document.getElementById('apps').innerHTML = apps.map(([n, c, p]) =>
  `<button class="app position-relative ${center} ${c}" aria-label="${n}"><svg width="22" height="22">${p}</svg>${n === 'Mail' ? '<span class="badge1 position-absolute">1</span>' : ''}</button>`).join('');
</script>
</body>
</html>
